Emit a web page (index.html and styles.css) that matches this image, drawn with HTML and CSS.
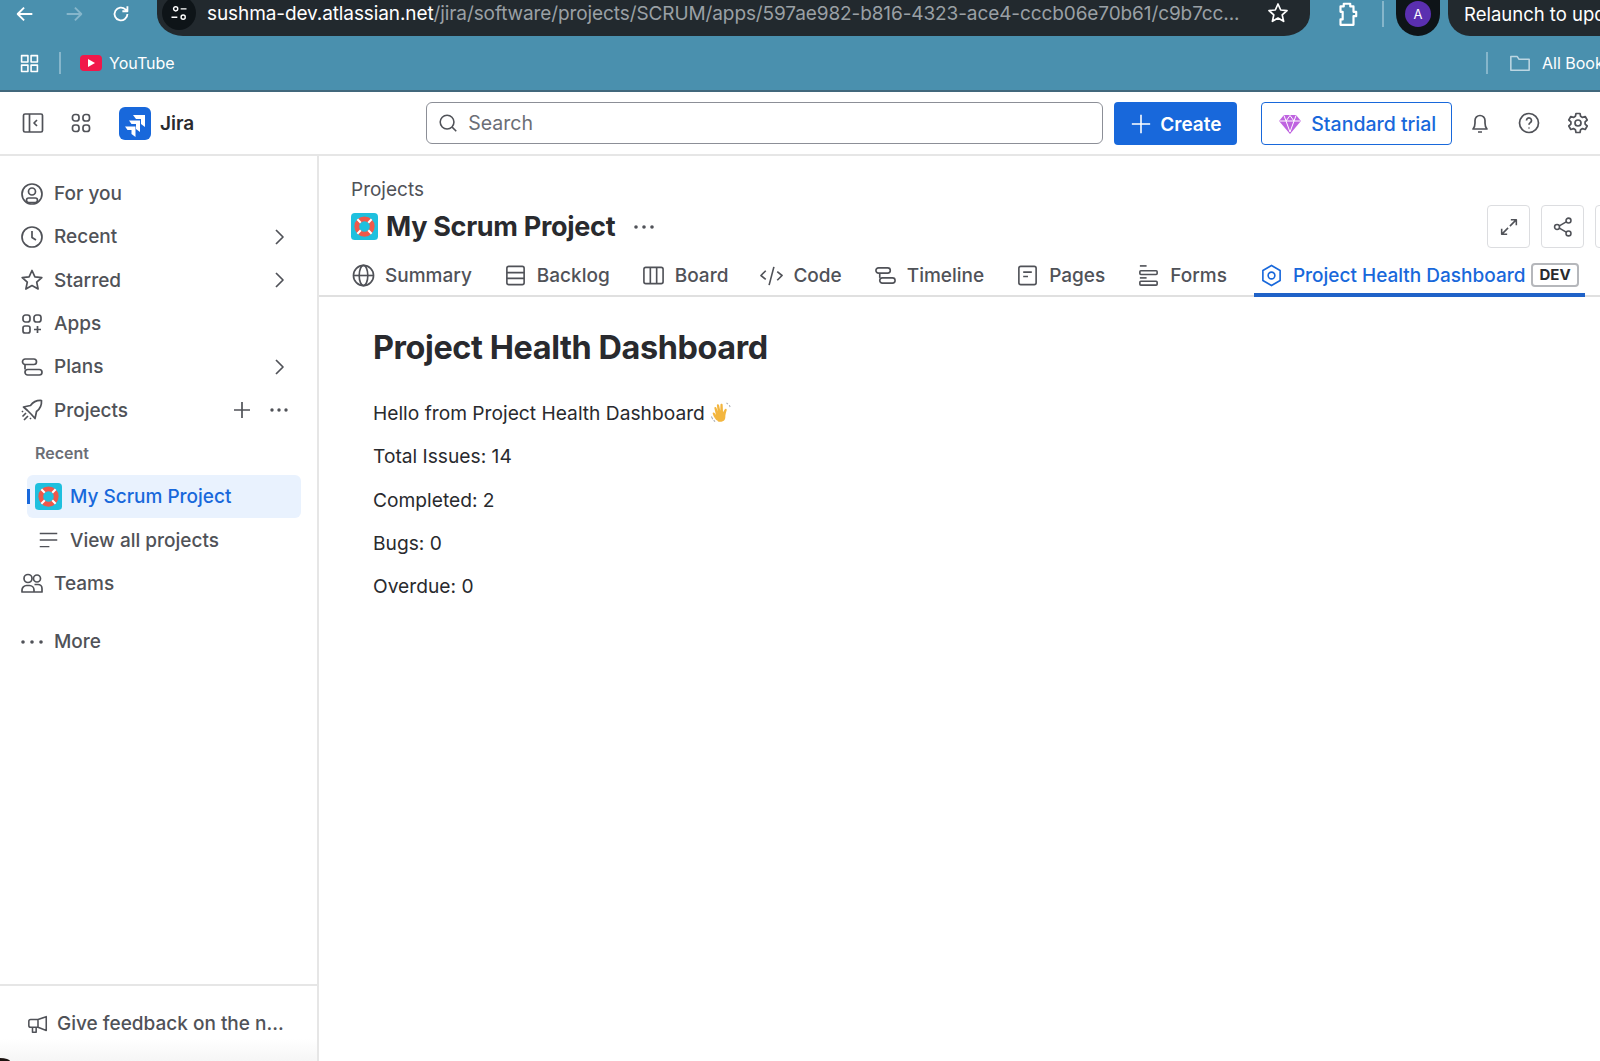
FILE: index.html
```html
<!DOCTYPE html>
<html lang="en">
<head>
	<meta charset="UTF-8">
	<title>Project Health Dashboard</title>
	<link rel="stylesheet" href="styles.css">
</head>
<body>
	<svg class="defs" width="0" height="0">
		<symbol id="buoy" viewBox="0 0 28 28">
			<rect width="28" height="28" rx="4" fill="#1fc0de"/>
			<circle cx="14" cy="14" r="8" fill="none" stroke="#f0584a" stroke-width="5"/>
			<path d="M6.600 6.600l3.500 3.500M21.400 6.600l-3.500 3.500M6.600 21.400l3.500-3.500M21.400 21.400l-3.500-3.500" stroke="#fff" stroke-width="2.200"/>
		</symbol>
	</svg>

	<div class="toolbar">
		<svg class="ic tb-ic" viewBox="0 0 24 24"><path d="M20 12H5M11 5l-7 7 7 7"/></svg>
		<svg class="ic tb-ic dim" viewBox="0 0 24 24"><path d="M4 12h15M13 5l7 7-7 7"/></svg>
		<svg class="ic tb-ic" viewBox="0 0 24 24"><path d="M19 12a7 7 0 1 1-2.200-5.100L19 9M19 3.500V9h-5.500"/></svg>
		<div class="url">
			<span class="url-site">
				<svg class="ic" viewBox="0 0 24 24"><circle cx="8" cy="7" r="2.500"/><path d="M14 7h7M3 17h7"/><circle cx="17" cy="17" r="2.500"/></svg>
			</span>
			<span class="url-host">sushma-dev.atlassian.net</span><span class="url-path">/jira/software/projects/SCRUM/apps/597ae982-b816-4323-ace4-cccb06e70b61/c9b7cc...</span>
			<svg class="ic url-star" viewBox="0 0 24 24"><path d="M12 3l2.700 6 6.300.6-4.800 4.300 1.400 6.400-5.600-3.300-5.600 3.300 1.400-6.400-4.800-4.300 6.300-.6z"/></svg>
		</div>
		<svg class="ic tb-puzzle" viewBox="0 0 24 24"><path d="M6 5h3V2.500h6V5h3v5h2.500v4H18v8H6v-5h2v-7H6z"/></svg>
		<span class="tb-sep"></span>
		<span class="profile"><span class="avatar">A</span></span>
		<span class="relaunch">Relaunch to update</span>
	</div>

	<div class="bookmarks">
		<svg class="ic bm-grid" viewBox="0 0 24 24"><rect x="2" y="2" width="8" height="8"/><rect x="14" y="2" width="8" height="8"/><rect x="2" y="14" width="8" height="8"/><rect x="14" y="14" width="8" height="8"/></svg>
		<span class="bm-sep"></span>
		<span class="yt"><i></i></span>
		<span class="bm-label">YouTube</span>
		<span class="bm-right">
			<span class="bm-sep"></span>
			<svg class="ic bm-folder" viewBox="0 0 24 24"><path d="M2 5h7l2 3h11v12H2z"/></svg>
			<span class="bm-label">All Bookmarks</span>
		</span>
	</div>

	<header class="topnav">
		<svg class="ic nav-ic side-toggle" viewBox="0 0 24 24"><rect x="2.500" y="3" width="19" height="18" rx="1.500"/><path d="M8.500 3v18M16 9l-3 3 3 3"/></svg>
		<svg class="ic nav-ic app-switch" viewBox="0 0 24 24"><rect x="3.500" y="3.500" width="6.500" height="6.500" rx="2.500"/><rect x="14" y="3.500" width="6.500" height="6.500" rx="2.500"/><rect x="3.500" y="14" width="6.500" height="6.500" rx="2.500"/><rect x="14" y="14" width="6.500" height="6.500" rx="2.500"/></svg>
		<span class="jira-logo">
			<svg viewBox="0 0 32 33"><path d="M14 8h12v12l-4-3v-5h-5zM10 13.500h11v11.500l-4-3v-5h-4.500zM6 19.500h10.500V30l-4-3v-4h-4z" fill="#fff"/></svg>
		</span>
		<span class="jira-name">Jira</span>
		<div class="search">
			<svg class="ic search-ic" viewBox="0 0 24 24"><circle cx="11" cy="11" r="7.500"/><path d="M16.500 16.500L21 21"/></svg>
			<span>Search</span>
		</div>
		<button class="create">
			<svg class="ic" viewBox="0 0 24 24"><path d="M12 2v20M2 12h20"/></svg>
			Create
		</button>
		<button class="trial">
			<svg viewBox="0 0 24 24"><path d="M6 3h12l5 6-11 13L1 9z" fill="#bf63e0"/><path d="M1.500 9h21M8 9l4 11 4-11M6 3.500L8 9l4-5.500L16 9l2-5.500" stroke="#fff" stroke-width="1" fill="none"/></svg>
			Standard trial
		</button>
		<svg class="ic nav-ic bell" viewBox="0 0 24 24"><path d="M5 18c1.500-1.500 2-3 2-6V9.500a5 5 0 0 1 10 0V12c0 3 .5 4.500 2 6zM10 21h4"/></svg>
		<svg class="ic nav-ic help" viewBox="0 0 24 24"><circle cx="12" cy="12" r="9.500"/><path d="M9.500 9.500a2.500 2.500 0 1 1 3.800 2.100c-.9.600-1.300 1.100-1.300 2.200M12 16.500v1"/></svg>
		<svg class="ic nav-ic gear" viewBox="0 0 24 24"><circle cx="12" cy="12" r="3"/><path d="M10 2.500h4l.6 2.800 1.900 1.100 2.700-.9 2 3.500-2.100 1.900v2.200l2.100 1.900-2 3.500-2.700-.9-1.900 1.100-.6 2.800h-4l-.6-2.800-1.900-1.100-2.700.9-2-3.500 2.100-1.900v-2.200L2.800 9l2-3.500 2.700.9 1.900-1.100z"/></svg>
	</header>

	<div class="layout">
		<aside class="sidebar">
			<nav class="side-nav">
				<a class="side-item">
					<svg class="ic side-ic" viewBox="0 0 24 24"><circle cx="12" cy="12" r="10"/><circle cx="12" cy="9.500" r="3.500"/><rect x="6.500" y="16" width="11" height="4.500" rx="2.200"/></svg>
					<span>For you</span>
				</a>
				<a class="side-item">
					<svg class="ic side-ic" viewBox="0 0 24 24"><circle cx="12" cy="12" r="10"/><path d="M12 6v6.500l4 2.500"/></svg>
					<span>Recent</span>
					<svg class="ic side-more" viewBox="0 0 24 24"><path d="M9 5l7 7-7 7"/></svg>
				</a>
				<a class="side-item">
					<svg class="ic side-ic" viewBox="0 0 24 24"><path d="M12 2.500l2.900 6.300 6.900.8-5.100 4.600 1.400 6.800-6.100-3.400-6.100 3.400 1.400-6.800-5.100-4.600 6.900-.8z"/></svg>
					<span>Starred</span>
					<svg class="ic side-more" viewBox="0 0 24 24"><path d="M9 5l7 7-7 7"/></svg>
				</a>
				<a class="side-item">
					<svg class="ic side-ic" viewBox="0 0 24 24"><rect x="3" y="3" width="7" height="7" rx="2.500"/><rect x="14" y="3" width="7" height="7" rx="2.500"/><rect x="3" y="14" width="7" height="7" rx="2"/><path d="M17.500 14v7M14 17.500h7"/></svg>
					<span>Apps</span>
				</a>
				<a class="side-item">
					<svg class="ic side-ic" viewBox="0 0 24 24"><rect x="2.500" y="4" width="14" height="5.500" rx="2.700"/><rect x="5" y="14.500" width="17" height="5.500" rx="2.700"/><path d="M5 9.500v5"/></svg>
					<span>Plans</span>
					<svg class="ic side-more" viewBox="0 0 24 24"><path d="M9 5l7 7-7 7"/></svg>
				</a>
				<a class="side-item">
					<svg class="ic side-ic" viewBox="0 0 24 24"><path d="M21.500 2.500c-5-.3-8.500 1.500-11 5L8 8 3.500 9l4 3.500 4 4L15 20.500l1-4.500.5-2.500c3.500-2.500 5.300-6 5-11zM6 15l-3.500 3.500M8 18l-4 4M3 13l-1 1M11 20l-1 1"/></svg>
					<span>Projects</span>
					<span class="side-actions">
						<svg class="ic side-more" viewBox="0 0 24 24"><path d="M12 4v16M4 12h16"/></svg>
						<svg class="dots" viewBox="0 0 24 24"><circle cx="5" cy="12" r="1.700"/><circle cx="12" cy="12" r="1.700"/><circle cx="19" cy="12" r="1.700"/></svg>
					</span>
				</a>
				<div class="side-label">Recent</div>
				<a class="side-item sub selected">
					<svg class="buoy"><use href="#buoy"/></svg>
					<span>My Scrum Project</span>
				</a>
				<a class="side-item sub">
					<svg class="ic view-ic" viewBox="0 0 24 24"><path d="M2 4h20M2 11.500h20M2 19h11"/></svg>
					<span>View all projects</span>
				</a>
				<a class="side-item">
					<svg class="ic side-ic" viewBox="0 0 24 24"><circle cx="8" cy="7.500" r="4"/><circle cx="17" cy="7.500" r="3.500"/><path d="M2 21v-2a4.500 4.500 0 0 1 4.500-4.500h3A4.500 4.500 0 0 1 14 19v2zM14.500 13.500H18a4 4 0 0 1 4 4V21h-7.500"/></svg>
					<span>Teams</span>
				</a>
				<a class="side-item more-item">
					<svg class="dots side-ic" viewBox="0 0 24 24"><circle cx="3" cy="12" r="1.800"/><circle cx="12" cy="12" r="1.800"/><circle cx="21" cy="12" r="1.800"/></svg>
					<span>More</span>
				</a>
			</nav>
			<div class="side-foot">
				<svg class="ic foot-ic" viewBox="0 0 24 24"><path d="M21 4v15l-9-3.500H4a2 2 0 0 1-2-2V9a2 2 0 0 1 2-2h8zM12 7v8.500M6 15.500V21h4v-5.500"/></svg>
				<span>Give feedback on the n...</span>
			</div>
		</aside>

		<main class="page">
			<div class="page-head">
				<div class="crumb">Projects</div>
				<div class="title-row">
					<svg class="buoy"><use href="#buoy"/></svg>
					<h2>My Scrum Project</h2>
					<svg class="dots title-dots" viewBox="0 0 24 24"><circle cx="4" cy="12" r="1.800"/><circle cx="12" cy="12" r="1.800"/><circle cx="20" cy="12" r="1.800"/></svg>
					<div class="head-btns">
						<button><svg class="ic" viewBox="0 0 24 24"><path d="M14 4h6v6M20 4l-7 7M10 20H4v-6M4 20l7-7"/></svg></button>
						<button><svg class="ic" viewBox="0 0 24 24"><circle cx="18" cy="5" r="2.700"/><circle cx="5.500" cy="12" r="2.700"/><circle cx="18" cy="19" r="2.700"/><path d="M8 10.700l7.500-4.300M8 13.300l7.500 4.300"/></svg></button>
						<button></button>
					</div>
				</div>
				<div class="tabs">
					<a class="tab">
						<svg class="ic" viewBox="0 0 24 24"><circle cx="12" cy="12" r="10.500"/><ellipse cx="12" cy="12" rx="4.500" ry="10.500"/><path d="M1.500 12h21"/></svg>
						Summary
					</a>
					<a class="tab">
						<svg class="ic" viewBox="0 0 24 24"><rect x="3" y="2.500" width="18" height="19" rx="2"/><path d="M3 9h18M3 15h18"/></svg>
						Backlog
					</a>
					<a class="tab">
						<svg class="ic" viewBox="0 0 24 24"><rect x="2" y="3.500" width="20" height="17" rx="2"/><path d="M8.700 3.500v17M15.300 3.500v17"/></svg>
						Board
					</a>
					<a class="tab">
						<svg class="ic" viewBox="0 0 24 24"><path d="M6 7l-5 5 5 4M18 8l5 4-5 5M14.500 3l-5 19"/></svg>
						Code
					</a>
					<a class="tab">
						<svg class="ic" viewBox="0 0 24 24"><rect x="2" y="4" width="15" height="5.500" rx="2.700"/><rect x="6" y="14.500" width="16" height="5.500" rx="2.700"/><path d="M6 9.500v5"/></svg>
						Timeline
					</a>
					<a class="tab">
						<svg class="ic" viewBox="0 0 24 24"><rect x="3" y="2.500" width="18" height="19" rx="2"/><path d="M7.500 8.500h9M7.500 13h5"/></svg>
						Pages
					</a>
					<a class="tab">
						<svg class="ic" viewBox="0 0 24 24"><path d="M3 2h7"/><rect x="3" y="7" width="18" height="4" rx="1"/><path d="M3 14.500h7"/><rect x="3" y="18" width="18" height="4" rx="1"/></svg>
						Forms
					</a>
					<a class="tab active">
						<svg class="ic" viewBox="0 0 24 24"><path d="M12 1.500l9 5.200v10.600l-9 5.200-9-5.200V6.700z"/><circle cx="12" cy="12" r="3.500"/></svg>
						Project Health Dashboard
						<span class="dev">DEV</span>
					</a>
				</div>
			</div>
			<section class="page-body">
				<h1>Project Health Dashboard</h1>
				<p>Hello from Project Health Dashboard
					<svg class="wave" viewBox="0 0 24 24"><path d="M9 22c-3-1-5-5-6-8-.4-1.500 1.200-2 2-.8l1.500 2L4.800 8c-.3-1.500 1.700-2 2.200-.6l1.500 4L7.500 5c-.2-1.600 2-1.900 2.400-.3l1.300 6 .2-6.500c0-1.600 2.300-1.600 2.400 0l.4 8 1.800-3c.8-1.300 2.700-.5 2.200 1-.8 2.500-1.500 5-1.500 7.500 0 4.500-4.500 5.800-8.700 4.300z" fill="#f3b63f"/><path d="M1.500 17l1.500 3M4 21l1.500 1.500M18 2l1.500 1.500M21 4.500l1 2" stroke="#a9adb3" stroke-width="1.200" fill="none"/></svg>
				</p>
				<p>Total Issues: 14</p>
				<p>Completed: 2</p>
				<p>Bugs: 0</p>
				<p>Overdue: 0</p>
			</section>
		</main>
	</div>
</body>
</html>
```
FILE: styles.css
```css
*{padding: 0;margin: 0;box-sizing: border-box;}
html,body{height: 100%;}
body{
	display: flex;
	flex-direction: column;
	overflow: hidden;
	position: relative;
	font-family: Inter, "Liberation Sans", sans-serif;
	color: #292a2e;
	background: #fff;
}
body::after{
	content: "";
	position: absolute;
	left: 0;
	bottom: 0;
	width: 10px;
	height: 3px;
	background: #1c1410;
	border-radius: 0 100% 0 0;
}
.defs{position: absolute;}
.ic{
	fill: none;
	stroke: currentColor;
	stroke-width: 1.700;
	stroke-linejoin: round;
	flex: none;
}
a{display: flex;align-items: center;}
button{font-family: inherit;}

/* browser toolbar */
.toolbar{
	display: flex;
	align-items: center;
	flex: none;
	height: 36px;
	background: #4a90ae;
	color: #fff;
	padding-left: 14px;
}
.tb-ic{width: 22px;height: 22px;stroke-width: 2;margin-top: -8px;margin-right: 27px;}
.tb-ic.dim{color: #86b6cb;margin-right: 25px;}
.tb-ic:nth-child(3){margin-right: 25px;}
.url{
	display: flex;
	align-items: center;
	flex: none;
	width: 1153px;
	height: 36px;
	padding: 0 0 10px 5px;
	background: #22292e;
	border-radius: 0 0 26px 26px / 0 0 22px 22px;
	font-size: 19px;
	white-space: nowrap;
}
.url-site{
	display: flex;
	align-items: center;
	justify-content: center;
	flex: none;
	width: 34px;
	height: 34px;
	margin-right: 11px;
	background: #0e1418;
	border-radius: 50%;
}
.url-site svg{width: 20px;height: 20px;}
.url-host{letter-spacing: -.1px;}
.url-path{color: #9aa0a5;letter-spacing: -.1px;}
.url-star{width: 24px;height: 24px;margin-left: auto;margin-right: 20px;}
.tb-puzzle{width: 26px;height: 26px;margin: -8px 0 0 24px;stroke-width: 2;}
.tb-sep{flex: none;width: 2px;height: 26px;background: #86b6cb;margin: -8px 12px 0 22px;}
.profile{
	display: flex;
	align-items: center;
	justify-content: center;
	flex: none;
	width: 44px;
	height: 36px;
	padding-bottom: 8px;
	background: #0e1418;
	border-radius: 0 0 22px 22px;
}
.avatar{
	width: 26px;
	height: 26px;
	background: #5a2fb0;
	border-radius: 50%;
	font-size: 13px;
	line-height: 26px;
	text-align: center;
}
.relaunch{
	flex: none;
	height: 36px;
	margin-left: 8px;
	padding: 0 24px 0 16px;
	background: #22292e;
	border-radius: 0 0 0 22px;
	font-size: 18.500px;
	line-height: 28px;
	white-space: nowrap;
}

/* bookmarks */
.bookmarks{
	display: flex;
	align-items: center;
	flex: none;
	height: 56px;
	padding: 0 0 0 20px;
	background: #4a90ae;
	border-bottom: 2px solid #41687c;
	color: #fff;
	white-space: nowrap;
}
.bm-grid{width: 19px;height: 19px;stroke-width: 2;}
.bm-sep{width: 2px;height: 22px;background: #86b6cb;margin: 0 19px 0 20px;}
.yt{
	display: flex;
	align-items: center;
	justify-content: center;
	width: 22px;
	height: 16px;
	margin-right: 7px;
	background: #f1174a;
	border-radius: 4px;
}
.yt i{
	border-left: 7px solid #fff;
	border-top: 4px solid transparent;
	border-bottom: 4px solid transparent;
}
.bm-label{font-size: 16px;}
.bm-right{
	display: flex;
	align-items: center;
	flex: none;
	width: 180px;
	margin-left: auto;
	margin-right: -66px;
}
.bm-right .bm-sep{margin: 0 21px 0 0;}
.bm-folder{width: 22px;height: 22px;color: #bcd6e2;margin-right: 11px;}

/* jira top nav */
.topnav{
	display: flex;
	align-items: center;
	flex: none;
	height: 64px;
	padding-left: 21px;
	border-bottom: 2px solid #e6e6e6;
	color: #505258;
	white-space: nowrap;
}
.nav-ic{width: 24px;height: 24px;}
.app-switch{margin-left: 24px;}
.jira-logo{
	flex: none;
	width: 32px;
	height: 33px;
	margin-left: 26px;
	background: #1868db;
	border-radius: 6px;
}
.jira-name{margin-left: 9px;font-size: 19px;font-weight: 600;color: #292a2e;}
.search{
	display: flex;
	align-items: center;
	width: 677px;
	height: 42px;
	margin-left: 232px;
	padding-left: 10px;
	border: 1px solid #8c8f97;
	border-radius: 6px;
	font-size: 19.500px;
	color: #6b6e76;
}
.search-ic{width: 22px;height: 22px;margin-right: 9px;color: #505258;}
.create{
	display: flex;
	align-items: center;
	gap: 8px;
	width: 123px;
	height: 43px;
	margin-left: 11px;
	padding: 2px 0 0 16px;
	border: none;
	border-radius: 4px;
	background: #1868db;
	color: #fff;
	font-size: 19px;
	font-weight: 600;
}
.create svg{width: 22px;height: 22px;}
.trial{
	display: flex;
	align-items: center;
	gap: 9px;
	width: 191px;
	height: 43px;
	margin-left: 24px;
	padding: 2px 0 0 16px;
	border: 1px solid #1868db;
	border-radius: 4px;
	background: #fff;
	color: #1868db;
	font-size: 19.500px;
	font-weight: 500;
}
.trial svg{width: 24px;height: 24px;}
.bell{margin-left: 16px;}
.help{margin-left: 25px;}
.gear{margin-left: 25px;}

/* layout */
.layout{
	display: flex;
	flex: 1;
	min-height: 0;
}
.sidebar{
	display: flex;
	flex-direction: column;
	flex: none;
	width: 319px;
	border-right: 2px solid #e6e6e6;
	color: #505258;
}
.side-nav{flex: 1;padding-top: 16px;}
.side-item{
	height: 43.300px;
	padding: 0 26px 0 20px;
	font-size: 19px;
	font-weight: 500;
	position: relative;
}
.side-ic{width: 24px;height: 24px;margin-right: 10px;}
.dots{width: 24px;height: 24px;fill: currentColor;flex: none;}
.side-more{width: 24px;height: 24px;margin-left: auto;}
.side-actions{display: flex;gap: 13px;margin-left: auto;}
.side-label{
	height: 43.300px;
	padding-left: 35px;
	font-size: 16px;
	font-weight: 600;
	line-height: 43px;
	color: #6b6e76;
}
.side-item.sub{margin: 0 16px 0 27px;padding: 0 0 0 8px;}
.side-item.selected{
	background: #e9f2fe;
	border-radius: 6px;
	color: #1868db;
}
.side-item.selected::before{
	content: "";
	position: absolute;
	left: 0;
	top: 14px;
	width: 3px;
	height: 15px;
	background: #1868db;
}
.buoy{width: 27px;height: 27px;flex: none;margin-right: 8px;}
.view-ic{width: 21px;height: 21px;margin: 0 11px 0 3px;}
.more-item{margin-top: 15px;}
.side-foot{
	display: flex;
	align-items: center;
	height: 77px;
	padding: 0 0 0 27px;
	border-top: 2px solid #e6e6e6;
	background: linear-gradient(#fff 70%, #f6f6f6);
	font-size: 19px;
	font-weight: 500;
}
.foot-ic{width: 22px;height: 22px;margin-right: 8px;}

/* page */
.page{flex: 1;min-width: 0;}
.page-head{padding-top: 22px;}
.crumb{
	height: 24px;
	padding-left: 32px;
	font-size: 19px;
	line-height: 24px;
	color: #505258;
}
.title-row{
	display: flex;
	align-items: center;
	height: 43px;
	margin-top: 3px;
	padding-left: 32px;
}
.title-row h2{font-size: 27px;font-weight: 700;letter-spacing: -.3px;}
.title-dots{margin: 0 0 0 17px;color: #505258;}
.head-btns{display: flex;flex: none;gap: 11px;margin-left: auto;margin-right: -38px;}
.head-btns button{
	display: flex;
	align-items: center;
	justify-content: center;
	width: 43px;
	height: 43px;
	border: 1px solid #dcdde0;
	border-radius: 4px;
	background: #fff;
	color: #505258;
}
.head-btns svg{width: 22px;height: 22px;}
.tabs{
	display: flex;
	gap: 32px;
	height: 49px;
	padding-left: 33px;
	border-bottom: 2px solid #e0e0e0;
	white-space: nowrap;
}
.tab{
	gap: 10px;
	height: 49px;
	padding-top: 5px;
	font-size: 19px;
	font-weight: 500;
	color: #505258;
	position: relative;
}
.tab svg{width: 23px;height: 23px;}
.tab.active{
	color: #1868db;
	padding: 5px 6px 0;
	margin-left: -5px;
}
.tab.active::after{
	content: "";
	position: absolute;
	left: 0;
	right: 0;
	bottom: 0;
	height: 4px;
	background: #1f62c8;
}
.dev{
	height: 24px;
	margin-left: -4px;
	padding: 0 6px;
	border: 2px solid #b5b7bb;
	border-radius: 4px;
	font-size: 15px;
	font-weight: 700;
	line-height: 20px;
	color: #292a2e;
}
.page-body{padding: 29px 0 0 54px;}
.page-body h1{
	height: 44px;
	margin-bottom: 29px;
	font-size: 32.400px;
	font-weight: 700;
	line-height: 44px;
	letter-spacing: -.4px;
}
.page-body p{
	height: 28px;
	margin-bottom: 15.300px;
	font-size: 19.200px;
	line-height: 28px;
}
.wave{width: 22px;height: 22px;vertical-align: -3px;}
```
